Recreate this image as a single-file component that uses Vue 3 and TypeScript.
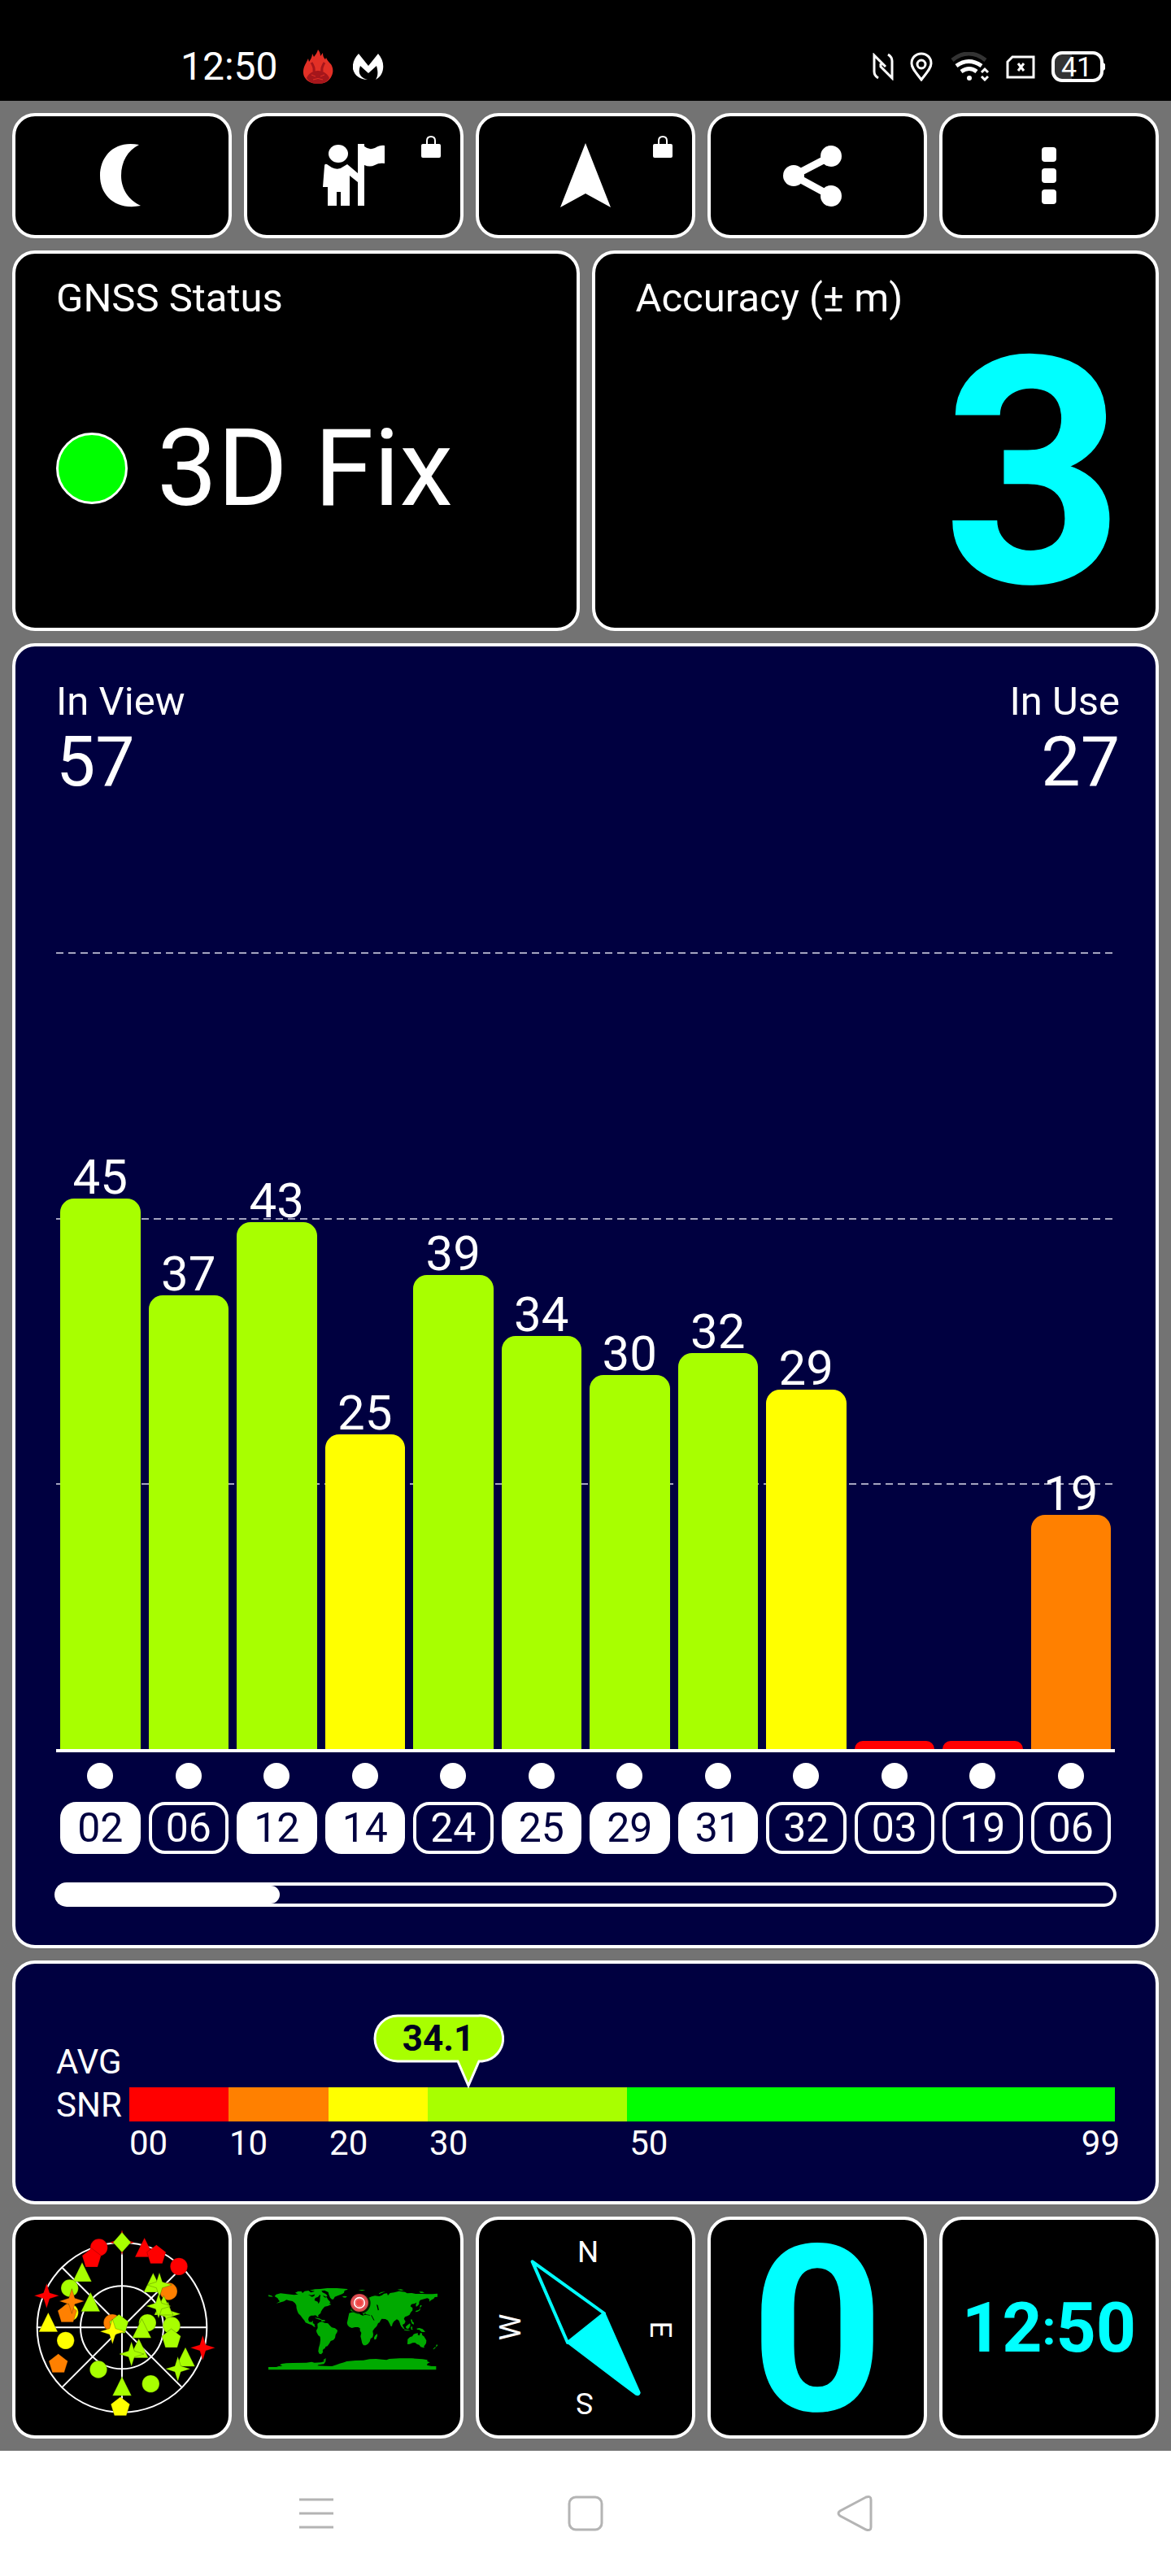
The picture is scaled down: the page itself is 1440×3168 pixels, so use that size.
<script setup lang="ts">
interface Satellite {
  id: string
  snr: number
  level: number
  color: string
  filled: boolean
}

const LIME = '#a8ff00'
const YELLOW = '#ffff00'
const ORANGE = '#ff8000'
const RED = '#ff0000'
const GREEN = '#00ff00'

// level: height of the bar as a share of the plot, in percent
const satellites: Satellite[] = [
  { id: '02', snr: 45, level: 69.1, color: LIME, filled: true },
  { id: '06', snr: 37, level: 56.9, color: LIME, filled: false },
  { id: '12', snr: 43, level: 66.1, color: LIME, filled: true },
  { id: '14', snr: 25, level: 39.5, color: YELLOW, filled: true },
  { id: '24', snr: 39, level: 59.5, color: LIME, filled: false },
  { id: '25', snr: 34, level: 51.8, color: LIME, filled: true },
  { id: '29', snr: 30, level: 46.9, color: LIME, filled: true },
  { id: '31', snr: 32, level: 49.7, color: LIME, filled: true },
  { id: '32', snr: 29, level: 45.1, color: YELLOW, filled: false },
  { id: '03', snr: 0, level: 1, color: RED, filled: false },
  { id: '19', snr: 0, level: 1, color: RED, filled: false },
  { id: '06', snr: 19, level: 29.4, color: ORANGE, filled: false },
]

const bands = [
  { from: '00', to: '', color: RED },
  { from: '10', to: '', color: ORANGE },
  { from: '20', to: '', color: YELLOW },
  { from: '30', to: '', color: LIME },
  { from: '50', to: '99', color: GREEN },
]

const inView = 57
const inUse = 27
const average = 34.1

const shapes = {
  circle: 'M-32 0a32 32 0 1 0 64 0a32 32 0 1 0-64 0z',
  triangle: 'M0-38L35 33H-35z',
  pentagon: 'M0-35L35-8L22 34H-22L-35-8z',
  star: 'M0-46L11-11L46 0L11 11L0 46L-11 11L-46 0L-11-11z',
  diamond: 'M0-37L33 0L0 37L-33 0z',
}

type Mark = [keyof typeof shapes, number, number, string]

const sky: Mark[] = [
  ['circle', 365, 192, RED],
  ['pentagon', 338, 230, RED],
  ['star', 450, 173, RED],
  ['diamond', 450, 173, LIME],
  ['triangle', 533, 194, RED],
  ['pentagon', 577, 217, RED],
  ['circle', 660, 262, RED],
  ['triangle', 303, 285, LIME],
  ['circle', 257, 342, LIME],
  ['star', 172, 370, RED],
  ['circle', 257, 432, YELLOW],
  ['pentagon', 248, 433, ORANGE],
  ['star', 265, 390, ORANGE],
  ['triangle', 334, 395, LIME],
  ['triangle', 178, 470, YELLOW],
  ['circle', 242, 535, YELLOW],
  ['pentagon', 215, 619, ORANGE],
  ['circle', 363, 642, LIME],
  ['triangle', 450, 706, LIME],
  ['pentagon', 444, 778, YELLOW],
  ['circle', 556, 695, LIME],
  ['circle', 414, 470, ORANGE],
  ['pentagon', 439, 474, LIME],
  ['star', 415, 502, YELLOW],
  ['circle', 544, 470, LIME],
  ['triangle', 523, 493, LIME],
  ['triangle', 512, 566, LIME],
  ['star', 485, 585, LIME],
  ['triangle', 565, 324, LIME],
  ['circle', 622, 354, ORANGE],
  ['star', 588, 330, LIME],
  ['star', 620, 437, LIME],
  ['triangle', 604, 408, LIME],
  ['star', 585, 408, LIME],
  ['circle', 633, 480, LIME],
  ['pentagon', 632, 527, LIME],
  ['star', 748, 562, RED],
  ['triangle', 684, 598, LIME],
  ['star', 656, 640, LIME],
]
</script>

<template>
  <div class="screen">
    <header class="status">
      <span class="clock">12:50</span>
      <svg class="app-flame" width="42" height="44" viewBox="370 58 42 44" aria-hidden="true">
        <path d="M391 59c2 2 3 5 3 8l3-4c0 4 1 6 3 8l1-2c2 4 4 6 6 8 3 5 3 10 1 14-3 7-9 10-17 10s-14-3-17-9c-2-5-1-11 2-16l3-6 1 4c2-3 4-6 4-10l2 4c2-3 4-5 5-9z" fill="#e23026" />
        <path d="M391 85c7 0 12 4 14 9-3 5-8 7-14 7s-11-2-14-7c2-5 7-9 14-9z" fill="#a5161b" />
        <path d="M386 86c1-5-1-8-3-11M396 86c-1-5 1-8 3-11" fill="none" stroke="#a5161b" stroke-width="3" />
        <path d="M383 90l5 2M399 90l-5 2M385 96q6-3 12 0" fill="none" stroke="#e23026" stroke-width="1" />
      </svg>
      <svg class="app-m" width="38" height="34" viewBox="434 64 38 34" aria-hidden="true">
        <path d="M441 65l12 15 12-15c5 6 7 12 6 19-1 6-4 10-9 13 3-5 3-10 1-17l-10 9-10-9c-3 8-1 14 9 17-9 0-16-5-18-13-1-7 2-14 7-19z" fill="#fff" />
      </svg>
      <div class="system">
        <svg width="26" height="34" viewBox="1073 64 26 34" aria-hidden="true">
          <path d="M1080 95q-5-3-5-8V67l14 14M1092 66q5 3 5 8v21l-14-14v-4" fill="none" stroke="#fff" stroke-width="3" />
        </svg>
        <svg width="28" height="36" viewBox="1119 62 28 36" aria-hidden="true">
          <path d="M1133 64c-7 0-12 5-12 12 0 6 6 12 12 20 6-8 12-14 12-20 0-7-5-12-12-12z" fill="none" stroke="#fff" stroke-width="3" />
          <circle cx="1133" cy="77" r="5" fill="none" stroke="#fff" stroke-width="3" />
        </svg>
        <svg width="50" height="36" viewBox="1169 62 50 36" aria-hidden="true">
          <path d="M1173 72q20-16 41 0" fill="none" stroke="#333" stroke-width="5" />
          <path d="M1178 79q15-11 31 0M1184 86q10-7 19 0" fill="none" stroke="#fff" stroke-width="5" />
          <circle cx="1194" cy="94" r="3" fill="#fff" />
          <path d="M1209 87l4-4 4 4M1209 92l4 4 4-4" fill="none" stroke="#fff" stroke-width="3" />
        </svg>
        <svg width="36" height="30" viewBox="1236 65 36 30" aria-hidden="true">
          <path d="M1244 68h26v25h-32V74z" fill="none" stroke="#fff" stroke-width="3" />
          <path d="M1251 76l7 9M1258 76l-7 9" stroke="#fff" stroke-width="3" />
        </svg>
        <svg width="66" height="38" viewBox="1293 61 66 38" aria-hidden="true">
          <path d="M1305 65h13v30h-13q-9 0-9-9V74q0-9 9-9z" fill="#333" />
          <rect x="1295" y="63" width="60" height="34" rx="11" fill="none" stroke="#fff" stroke-width="4" />
          <path d="M1356 74l3 3v6l-3 3z" fill="#fff" />
          <text x="1324" y="92" text-anchor="middle" class="battery-text">41</text>
        </svg>
      </div>
    </header>

    <main class="board">
      <nav class="row five">
        <button class="card tool" type="button" aria-label="Night mode">
          <svg width="90" height="80" viewBox="105 176 90 80">
            <path d="M171 178C142 172 123 191 123 216s20 43 50 37c-15-7-24-21-24-37 0-17 8-31 22-38z" />
          </svg>
        </button>
        <button class="card tool" type="button" aria-label="Waypoints">
          <svg width="90" height="80" viewBox="390 176 90 80">
            <ellipse cx="416" cy="189" rx="12" ry="11" />
            <path d="M402 202l6 4q8 4 14-1l5-3 13 11v-36h8v3q6 5 13 2 7-4 12-3v22q-7-1-12 2-6 3-13 0v50h-8v-29l-10-8v37h-11v-17h-5v17h-11v-23h-6l2-26q0-3 3-2z" />
          </svg>
          <svg class="lock" width="24" height="28" viewBox="0 0 24 28">
            <path d="M7 12V7q0-5 5-5t5 5v5" fill="none" stroke="#fff" stroke-width="2" />
            <rect y="11" width="24" height="17" rx="2" />
          </svg>
        </button>
        <button class="card tool" type="button" aria-label="Navigate">
          <svg width="90" height="80" viewBox="675 176 90 80">
            <path d="M720 176l31 79-31-17-31 17z" />
          </svg>
          <svg class="lock" width="24" height="28" viewBox="0 0 24 28">
            <path d="M7 12V7q0-5 5-5t5 5v5" fill="none" stroke="#fff" stroke-width="2" />
            <rect y="11" width="24" height="17" rx="2" />
          </svg>
        </button>
        <button class="card tool" type="button" aria-label="Share">
          <svg width="90" height="80" viewBox="960 176 90 80">
            <path d="M1022 192l-46 24 46 25" fill="none" stroke="#fff" stroke-width="9" />
            <circle cx="976" cy="216" r="13" />
            <circle cx="1022" cy="192" r="13" />
            <circle cx="1022" cy="241" r="13" />
          </svg>
        </button>
        <button class="card tool" type="button" aria-label="More options">
          <svg width="90" height="80" viewBox="1245 176 90 80">
            <rect x="1281" y="181" width="18" height="18" rx="4" />
            <rect x="1281" y="207" width="18" height="18" rx="4" />
            <rect x="1281" y="233" width="18" height="18" rx="4" />
          </svg>
        </button>
      </nav>

      <div class="row two">
        <section class="card panel">
          <h2 class="label">GNSS Status</h2>
          <div class="fix">
            <span class="lamp"></span>
            <span class="fix-text">3D Fix</span>
          </div>
        </section>
        <section class="card panel">
          <h2 class="label">Accuracy (± m)</h2>
          <p class="accuracy">3</p>
        </section>
      </div>

      <section class="card navy chart">
        <div class="counts">
          <div>
            <h2 class="label">In View</h2>
            <p class="count">{{ inView }}</p>
          </div>
          <div class="end">
            <h2 class="label">In Use</h2>
            <p class="count">{{ inUse }}</p>
          </div>
        </div>
        <div class="plot">
          <div class="grid"><i></i><i></i><i></i></div>
          <div v-for="(s, i) in satellites" :key="i" class="slot">
            <span v-if="s.snr" class="value">{{ s.snr }}</span>
            <div class="bar" :style="{ height: s.level + '%', background: s.color }"></div>
          </div>
        </div>
        <ul class="ids">
          <li v-for="(s, i) in satellites" :key="i">
            <span class="dot"></span>
            <span class="chip" :class="{ filled: s.filled }">{{ s.id }}</span>
          </li>
        </ul>
        <div class="scroll">
          <div class="thumb" :style="{ width: (satellites.length / inView) * 100 + '%' }"></div>
        </div>
      </section>

      <section class="card navy snr">
        <h2 class="snr-title">AVG<br />SNR</h2>
        <div class="scale">
          <div class="bubble" :style="{ left: (average / 99) * 100 + '%' }">
            <svg width="163" height="92" viewBox="0 0 163 92" aria-hidden="true">
              <path d="M32 2h99a28 28 0 0 1 5 56h-4l-13 30-13-30H32a28 28 0 0 1 0-56z" fill="#a8ff00" stroke="#fff" stroke-width="3" />
            </svg>
            <span>{{ average }}</span>
          </div>
          <div class="bands">
            <div v-for="b in bands" :key="b.from" :style="{ background: b.color }"></div>
          </div>
          <div class="bands ticks">
            <div v-for="b in bands" :key="b.from">
              <span>{{ b.from }}</span><span v-if="b.to">{{ b.to }}</span>
            </div>
          </div>
        </div>
      </section>

      <nav class="row five">
        <button class="card tile" type="button" aria-label="Sky view">
          <svg viewBox="57 90 786 795">
            <g fill="none" stroke="#fff" stroke-width="6">
              <circle cx="450" cy="487" r="313" />
              <circle cx="450" cy="487" r="153" />
              <path d="M137 487H763M450 174V800M230 267L670 707M670 267L230 707" />
            </g>
            <path
              v-for="([kind, x, y, color], i) in sky"
              :key="i"
              :d="shapes[kind]"
              :transform="`translate(${x} ${y})`"
              :fill="color"
              stroke="#000"
              stroke-opacity="0.35"
              stroke-width="2"
            />
          </svg>
        </button>
        <button class="card tile" type="button" aria-label="World map">
          <svg viewBox="42 90 786 795">
            <g fill="#00aa00">
              <path d="M143 372l6-7 16-4 24 3 26 3 30-3 22 2 14 8 8-3 4-10 12 0 4 7-7 7-9 3-3 9 12 5 3 8 5-10 1-18 8-3 11 8 5-2 5 9 9 10-4 5 7 3-13 6-11 2-8 9-6 10-1 5-9 8 0 9-4-5-6-4-8 1-8 0-8 5-3 9 3 9 9 1 6-5-1 9 6 4 1 7 5 1-7 2-9-7-11-4-12-5-4-8-7-8-7-10-8-7-4-9-3-11-1-11-5-8-9-7-13-2-9-3-10 6-16 4-12 3 13-7-5-7-3-5z" />
              <path d="M219 359l10-5 13 0 4 6 8-7 14-2 9 7 11-3 5-8 10 4 12-1 5 8 11 5 7 7-5 4-9-4-9 5-5-9-15-2-15 4-18-2-19 4-14-5z" />
              <path d="M280 352l-7-2 19-4 20-1 25-3 36 0 37 3 3 2-12 4-2 8-7 5-14 5-13 5-5 9-6 0-6-6-5-12-2-8-14-7-20 3z" />
              <path d="M393 373l8-2 10 2-7 4-8-1zM452 349l16-1 10 2-14 2zM528 361l10-5 14-1-14 5-9 4zM596 347l12-1 12 3-10 2zM676 355l12 0 8 4-14 1zM120 367l12 3 5 4-16-1z" />
              <path d="M292 451l16 3 10 5-7 0-16-5zM313 458l16 2 0 4-12 0z" />
              <path d="M301 473l9-6 8-1 10 4 12 2 7 8 7 7 12 3 9 7-1 7-6 10-2 12-6 7-10 4-5 9-7 10-7 2-2 6-6 3-3 6 2 5-5 5-1 3-8-2-4-9 2-13 4-14 2-15-1-12-7-5-6-11-1-7 5-9z" />
              <path d="M418 434l10-3 22-2 6 2 2 8 10 4 10-3 18 3 5 11 7 13 6 5 11-1-5 11-9 9-6 9 2 13-2 10-8 6-3 10-7 9-8 5-8 0-5-8-3-13-3-12 3-13-5-8 0-9-7-4-11 0-12 3-9-4-6-6-3-8 2-8zM522 510l0 8-5 13-6 1-1-8 4-7z" />
              <path d="M424 426l-1-13 12-2 3-8-6-5 12-7 9-10 6-8 12-5 12 2 6 8 12-5 12-3 16 2 10-4 8-6 11-1 3 8 8-9 15-2 18-5 22 3 8 5 17-1 14 3 24 0 18 1 20 0 19-2 0 12-10 1-4 6-11 6-4 5-2-10-7-3-16 4-10 3-4 7 0 8-7 8-4 1-1-7 3-8-7 4-12 2-4 8 8 6 0 9-7 8-4 8-8 5-9 3-4 7 6 10-4 8-7 4 3 12-7-5-5-12-5-11-7-4-11 8-5 8-2 9-4 1-6-13-5-9-9-5-14-1-4 6-4 8-13 6-9 3-7-8-6-14-2-6 2-9-14-2-4-5-5 7-10-12-11-3-8 7z" />
              <path d="M604 469l8 7 7 10 4 7-6-2-8-10zM620 494l16 2 8 3-12 0-10-2zM627 484l8-7 7-5 2 6-4 10-5 5-7-3zM645 484l8 1-3 4 3 7-6-1zM646 456l5 3 0 6 5 3 1 8-7-3-4-10zM667 491l10-2 12 4 10 10-7 1-7-1-8-7-8-1z" />
              <path d="M634 530l8-7 9-3 5-8 7-3 9-1-1 6 6 3 4-10 5 1 2 8 6 4 5 8 4 7-1 10-7 11-5 5-8-2-6-8-7-2-8-6-9 1-10 4-9 1z" />
              <path d="M689 558l7 0-3 5zM741 549l4 4-5 6-2-3zM736 558l1 4-7 6-3-1zM681 404l5 2-3 6-5 1zM681 415l-2 9-9 5-8 1 3-5 9-2z" />
              <path d="M120 633h30l8-3 14 0-10-5 8-4 16-2 24-1 50-1 20-3 10 3 25-1 13-5-6-3 10-8-1 13-6 9-20 3-4 3 28 1 26 1 16-5 12-5 16-4 10-4 32-3 30-1 22-4 25-1 22 2 16 2 10-4 38-2 45 0 40 3 18 3-1 5 10 4-9 4-2 6 17 4h17v13H120z" />
            </g>
            <path d="M519 402l5 3 4 18-4 1z" fill="#000" />
            <path d="M500 442l10 19" stroke="#000" stroke-width="3" />
            <circle cx="457" cy="397" r="40" fill="#000" fill-opacity="0.8" />
            <circle cx="456" cy="396" r="33" fill="#d9484c" />
            <circle cx="456" cy="396" r="27" fill="#f07c7c" />
            <circle cx="456" cy="396" r="26" fill="#d9484c" />
            <circle cx="456" cy="396" r="19" fill="#f04545" stroke="#fff" stroke-width="5" />
            <circle cx="456" cy="396" r="13" fill="none" stroke="#f79a9a" stroke-width="2" />
          </svg>
        </button>
        <button class="card tile" type="button" aria-label="Compass">
          <svg viewBox="57 90 786 795">
            <g class="points">
              <text x="459" y="246">N</text>
              <text transform="translate(447 730) rotate(180)">S</text>
              <text transform="translate(690 495) rotate(90)">E</text>
              <text transform="translate(211 486) rotate(-90)">W</text>
            </g>
            <g stroke="#00ffff" stroke-width="12" stroke-linejoin="round">
              <path d="M254 244L519 435L384 543z" fill="none" />
              <path d="M519 438L647 728Q645 735 638 732L388 543z" fill="#00ffff" />
            </g>
          </svg>
        </button>
        <button class="card tile speed" type="button">0</button>
        <button class="card tile time" type="button">
          <span>12</span><span class="colon">:</span><span>50</span>
        </button>
      </nav>
    </main>

    <footer class="softkeys">
      <button type="button" aria-label="Recent apps">
        <svg width="46" height="46" viewBox="0 0 46 46"><path d="M2 6H44M2 23H44M2 40H44" /></svg>
      </button>
      <button type="button" aria-label="Home">
        <svg width="46" height="46" viewBox="0 0 46 46"><rect x="3" y="3" width="40" height="40" rx="8" /></svg>
      </button>
      <button type="button" aria-label="Back">
        <svg width="46" height="46" viewBox="0 0 46 46"><path d="M37 3L5 20Q1 23 5 26L37 43Q43 45 43 40V6Q43 1 37 3z" /></svg>
      </button>
    </footer>
  </div>
</template>

<style>
body {
  margin: 0;
  background: #fff;
}
</style>

<style scoped>
.screen {
  font-family: Roboto, 'Noto Sans', sans-serif;
  color: #fff;
}
.screen * {
  box-sizing: border-box;
}
h2,
p,
ul {
  margin: 0;
  padding: 0;
  font-weight: 400;
}
svg {
  display: block;
  flex: none;
}
button {
  font-family: inherit;
  color: inherit;
  cursor: pointer;
}

/* status bar */
.status {
  display: flex;
  align-items: center;
  padding: 40px 81px 0 222px;
  height: 124px;
  background: #000;
}
.clock {
  font-size: 48px;
  line-height: 48px;
}
.app-flame {
  margin-left: 28px;
}
.app-m {
  margin-left: 22px;
}
.system {
  display: flex;
  align-items: center;
  gap: 20px;
  margin-left: auto;
}
.battery-text {
  font-size: 34px;
  fill: #fff;
}

/* board of cards */
.board {
  display: flex;
  flex-direction: column;
  gap: 15px;
  padding: 15px;
  background: #737373;
}
.row {
  display: grid;
  gap: 15px;
}
.five {
  grid-template-columns: repeat(5, 1fr);
}
.two {
  grid-template-columns: repeat(2, 1fr);
}
.card {
  border: 4px solid #fff;
  border-radius: 28px;
  background: #000;
}
.navy {
  background: #000040;
}
.tool {
  position: relative;
  display: flex;
  align-items: center;
  justify-content: center;
  padding: 33px 0;
}
.tool svg {
  fill: #fff;
}
.lock {
  position: absolute;
  top: 23px;
  right: 24px;
}
.label {
  font-size: 49px;
  line-height: 56px;
}

/* status and accuracy */
.panel {
  display: flex;
  flex-direction: column;
  padding: 27px 50px 1px;
}
.fix {
  display: flex;
  flex: 1;
  align-items: center;
  gap: 36px;
  padding-bottom: 14px;
}
.lamp {
  width: 88px;
  height: 88px;
  border: 3px solid #fff;
  border-radius: 50%;
  background: #00ff00;
}
.fix-text {
  font-size: 132px;
  line-height: 140px;
}
.accuracy {
  margin-right: -12px;
  color: #00ffff;
  font-size: 390px;
  font-weight: 700;
  line-height: 376px;
  text-align: right;
}

/* signal chart */
.chart {
  padding: 40px 50px 47px;
}
.counts {
  display: flex;
  justify-content: space-between;
  margin-right: -6px;
}
.end {
  text-align: right;
}
.count {
  font-size: 86px;
  line-height: 92px;
}
.plot {
  position: relative;
  display: grid;
  grid-template-columns: repeat(12, 1fr);
  height: 984px;
  margin-top: 188px;
  border-bottom: 4px solid #fff;
}
.grid {
  position: absolute;
  inset: 0;
  display: grid;
  grid-template-rows: repeat(3, 1fr);
}
.grid i {
  height: 2px;
  background: repeating-linear-gradient(90deg, #a4a4c0 0 9px, transparent 9px 15px);
}
.slot {
  position: relative;
  display: flex;
  flex-direction: column;
  align-items: center;
  justify-content: flex-end;
  padding: 0 5px;
  min-height: 0;
}
.value {
  font-size: 60px;
  line-height: 52px;
}
.bar {
  flex: none;
  width: 100%;
  border-radius: 17px 17px 0 0;
}
.ids {
  display: grid;
  grid-template-columns: repeat(12, 1fr);
  margin-top: 13px;
  list-style: none;
}
.ids li {
  display: flex;
  flex-direction: column;
  align-items: center;
  gap: 16px;
  padding: 0 5px;
}
.dot {
  width: 32px;
  height: 32px;
  border-radius: 50%;
  background: #fff;
}
.chip {
  width: 100%;
  border: 4px solid #fff;
  border-radius: 20px;
  font-size: 50px;
  line-height: 56px;
  text-align: center;
}
.chip.filled {
  background: #fff;
  color: #000040;
}
.scroll {
  height: 30px;
  margin: 35px -2px 0;
  border: 4px solid #fff;
  border-radius: 15px;
}
.thumb {
  height: 100%;
  border-radius: 0 11px 11px 0;
  background: #fff;
}

/* average signal */
.snr {
  display: flex;
  padding: 94px 50px 46px;
}
.snr-title {
  width: 90px;
  font-size: 42px;
  line-height: 53px;
}
.scale {
  position: relative;
  flex: 1;
  padding-top: 58px;
}
.bands {
  display: grid;
  grid-template-columns: 10fr 10fr 10fr 20fr 49fr;
  height: 42px;
}
.ticks {
  height: auto;
  margin: 2px -6px 0 0;
  font-size: 42px;
  line-height: 50px;
}
.ticks div {
  display: flex;
  justify-content: space-between;
}
.bubble {
  position: absolute;
  bottom: 92px;
  width: 163px;
  margin-left: -119px;
}
.bubble span {
  position: absolute;
  inset: 0 0 auto;
  color: #000020;
  font-size: 44px;
  font-weight: 700;
  line-height: 60px;
  text-align: center;
}

/* bottom tiles */
.tile {
  display: flex;
  align-items: center;
  justify-content: center;
  min-width: 0;
  padding: 0;
}
.tile svg {
  width: 100%;
}
.points {
  fill: #fff;
  font-size: 110px;
  text-anchor: middle;
}
.speed,
.time {
  color: #00ffff;
  font-weight: 700;
}
.speed {
  padding-top: 9px;
  font-size: 286px;
  line-height: 256px;
}
.time {
  font-size: 86px;
  line-height: 100px;
}
.colon {
  font-size: 60px;
}

/* system keys */
.softkeys {
  display: grid;
  grid-template-columns: repeat(3, 1fr);
  width: 69%;
  margin: 0 auto;
  background: #fff;
}
.softkeys button {
  display: flex;
  justify-content: center;
  padding: 54px 0;
  border: 0;
  background: none;
}
.softkeys svg {
  fill: none;
  stroke: #b4b4b4;
  stroke-width: 3;
}
</style>
